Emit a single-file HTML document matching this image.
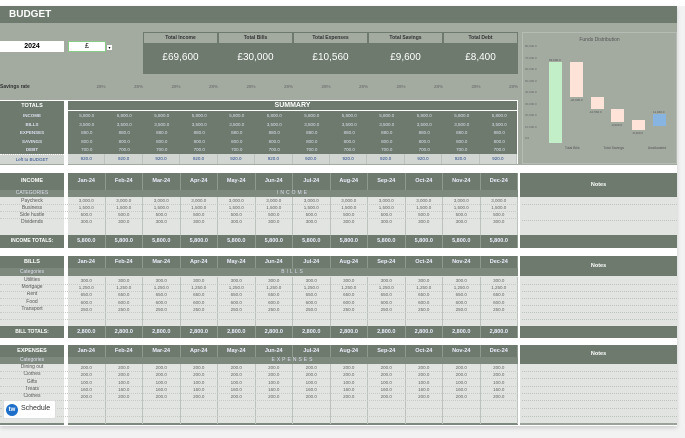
<!DOCTYPE html>
<html><head><meta charset="utf-8"><style>
*{margin:0;padding:0;box-sizing:border-box}
body{width:685px;height:438px;background:#f2f2f2;font-family:"Liberation Sans",sans-serif;position:relative;overflow:hidden}
.a{position:absolute}
.dk{background:#6d7a6d;color:#fff}
.lt{background:#e1e4e1;color:#555}
.row{position:absolute;display:flex;left:68px;width:450px}
.row span{flex:1;text-align:center;font-size:4.5px;line-height:inherit}
.hdr span{font-size:5.5px;font-weight:bold;border-right:1px solid #8f9a8f;color:#eef}
.grid span{border-right:1px solid #bcc2bc}
.lab{position:absolute;left:0;width:64px;text-align:center;font-size:5px}
.ln{position:absolute;left:0;width:518px;border-top:1px dotted #c6cbc6}
.nl{position:absolute;left:522px;width:155px;border-top:1px dotted #bcc2bc}
.v{position:absolute;font-size:3px;color:#555}
</style></head><body>
<div class="a" style="left:0;top:0;width:685px;height:6px;background:#fff"></div>
<div class="a" style="left:0;top:6px;width:677px;height:420px;background:#fff;box-shadow:0 2px 4px #ccc"></div>
<div class="a dk" style="left:0;top:6px;width:677px;height:17px;font-weight:bold;font-size:10px;padding:3px 9px">BUDGET</div>
<div class="a" style="left:0;top:23px;width:677px;height:142px;background:#a3aba1"></div>
<div class="a" style="left:0;top:41px;width:64px;height:11px;background:#fff;font-size:7px;font-weight:bold;text-align:center;line-height:11px">2024</div>
<div class="a" style="left:68px;top:41px;width:38px;height:11px;background:#fff;border:1px solid #8c8;font-size:7px;text-align:center;line-height:9px">£</div>
<div class="a" style="left:107px;top:45px;width:5px;height:5px;background:#fff;font-size:4px;text-align:center">▾</div>
<div class="a" style="left:143px;top:32px;width:375px;height:42px;display:flex">
<div style="flex:1;border:1px solid #6d7a6d"><div style="height:10px;font-size:5px;font-weight:bold;text-align:center;line-height:10px;color:#333;background:#a3aba1">Total Income</div><div class="dk" style="height:30px;font-size:10px;text-align:center;line-height:30px">£69,600</div></div>
<div style="flex:1;border:1px solid #6d7a6d"><div style="height:10px;font-size:5px;font-weight:bold;text-align:center;line-height:10px;color:#333;background:#a3aba1">Total Bills</div><div class="dk" style="height:30px;font-size:10px;text-align:center;line-height:30px">£30,000</div></div>
<div style="flex:1;border:1px solid #6d7a6d"><div style="height:10px;font-size:5px;font-weight:bold;text-align:center;line-height:10px;color:#333;background:#a3aba1">Total Expenses</div><div class="dk" style="height:30px;font-size:10px;text-align:center;line-height:30px">£10,560</div></div>
<div style="flex:1;border:1px solid #6d7a6d"><div style="height:10px;font-size:5px;font-weight:bold;text-align:center;line-height:10px;color:#333;background:#a3aba1">Total Savings</div><div class="dk" style="height:30px;font-size:10px;text-align:center;line-height:30px">£9,600</div></div>
<div style="flex:1;border:1px solid #6d7a6d"><div style="height:10px;font-size:5px;font-weight:bold;text-align:center;line-height:10px;color:#333;background:#a3aba1">Total Debt</div><div class="dk" style="height:30px;font-size:10px;text-align:center;line-height:30px">£8,400</div></div>
</div>
<div class="a" style="left:0;top:84px;font-size:5px;font-weight:bold;color:#333">Savings rate</div>
<div class="row" style="top:84px;line-height:6px;color:#666"><span style="text-align:right">28%</span><span style="text-align:right">28%</span><span style="text-align:right">28%</span><span style="text-align:right">28%</span><span style="text-align:right">28%</span><span style="text-align:right">28%</span><span style="text-align:right">28%</span><span style="text-align:right">28%</span><span style="text-align:right">28%</span><span style="text-align:right">28%</span><span style="text-align:right">28%</span><span style="text-align:right">28%</span></div>
<!-- chart -->
<div class="a" style="left:522px;top:32px;width:155px;height:132px;border:1px solid #b5bcb3;background:#a3aba1">
<div style="text-align:center;font-size:5px;color:#555;margin-top:4px">Funds Distribution</div>
<div class="a" style="left:26px;top:29px;width:13px;height:81px;background:#c3efc8"></div>
<div class="a" style="left:47px;top:29px;width:13px;height:35px;background:#fde3d8"></div>
<div class="a" style="left:68px;top:64px;width:13px;height:12px;background:#fde3d8"></div>
<div class="a" style="left:88px;top:76px;width:13px;height:13px;background:#fde3d8"></div>
<div class="a" style="left:109px;top:87px;width:13px;height:10px;background:#fde3d8"></div>
<div class="a" style="left:130px;top:81px;width:13px;height:12px;background:#88b4e2"></div>
<div class="v" style="left:26px;top:25px">69,600.0</div>
<div class="v" style="left:47px;top:65px">-30,000.0</div>
<div class="v" style="left:66px;top:77px">-10,560.0</div>
<div class="v" style="left:88px;top:90px">-9,600.0</div>
<div class="v" style="left:109px;top:98px">-8,400.0</div>
<div class="v" style="left:130px;top:77px">11,040.0</div>
<div class="a" style="left:2px;top:8px;font-size:3px;color:#666;line-height:11.5px">80,000.0<br>70,000.0<br>60,000.0<br>50,000.0<br>40,000.0<br>30,000.0<br>20,000.0<br>10,000.0<br>0.0</div>
<div class="a" style="left:30px;top:113px;width:125px;font-size:3.5px;color:#555;display:flex;justify-content:space-around"><span>Total Bills</span><span>Total Savings</span><span>Unallocated</span></div>
</div>
<!-- totals -->
<div class="a dk" style="left:0;top:100px;width:64px;height:54px;border-top:1px solid #fff"></div>
<div class="lab dk" style="top:101px;height:10px;line-height:10px;font-weight:bold;font-size:5.5px">TOTALS</div>
<div class="lab" style="top:112px;color:#dde;font-size:4.5px;line-height:8.5px;font-weight:bold">INCOME<br>BILLS<br>EXPENSES<br>SAVINGS<br>DEBT</div>
<div class="a" style="left:0;top:154px;width:64px;height:10px;background:#d2d6d2;font-size:4.5px;color:#2a4b8a;text-align:center;line-height:10px;border-top:1px dotted #fff">Left to BUDGET</div>
<div class="a dk" style="left:68px;top:100px;width:450px;height:54px;border-top:1px solid #fff;border-right:1px solid #fff"></div>
<div class="a" style="left:68px;top:101px;width:450px;height:10px;font-size:7px;font-weight:bold;color:#fff;text-align:center;line-height:10px;border-bottom:1px solid #fff;border-right:1px solid #fff">SUMMARY</div>
<div class="row" style="top:112px;line-height:8.5px;color:#dde"><span>5,800.0</span><span>5,800.0</span><span>5,800.0</span><span>5,800.0</span><span>5,800.0</span><span>5,800.0</span><span>5,800.0</span><span>5,800.0</span><span>5,800.0</span><span>5,800.0</span><span>5,800.0</span><span>5,800.0</span></div>
<div class="row" style="top:120.5px;line-height:8.5px;color:#dde"><span>3,500.0</span><span>3,500.0</span><span>3,500.0</span><span>3,500.0</span><span>3,500.0</span><span>3,500.0</span><span>3,500.0</span><span>3,500.0</span><span>3,500.0</span><span>3,500.0</span><span>3,500.0</span><span>3,500.0</span></div>
<div class="row" style="top:129px;line-height:8.5px;color:#dde"><span>880.0</span><span>880.0</span><span>880.0</span><span>880.0</span><span>880.0</span><span>880.0</span><span>880.0</span><span>880.0</span><span>880.0</span><span>880.0</span><span>880.0</span><span>880.0</span></div>
<div class="row" style="top:137.5px;line-height:8.5px;color:#dde"><span>800.0</span><span>800.0</span><span>800.0</span><span>800.0</span><span>800.0</span><span>800.0</span><span>800.0</span><span>800.0</span><span>800.0</span><span>800.0</span><span>800.0</span><span>800.0</span></div>
<div class="row" style="top:146px;line-height:8.5px;color:#dde"><span>700.0</span><span>700.0</span><span>700.0</span><span>700.0</span><span>700.0</span><span>700.0</span><span>700.0</span><span>700.0</span><span>700.0</span><span>700.0</span><span>700.0</span><span>700.0</span></div>
<div class="row grid" style="top:154px;height:10px;line-height:10px;background:#d2d6d2;color:#2a4b8a;border-right:1px solid #fff"><span>920.0</span><span>920.0</span><span>920.0</span><span>920.0</span><span>920.0</span><span>920.0</span><span>920.0</span><span>920.0</span><span>920.0</span><span>920.0</span><span>920.0</span><span>920.0</span></div>
<div class="a" style="left:64px;top:100px;width:4px;height:65px;background:#fff"></div>

<!-- INCOME -->
<div class="a lt" style="left:0;top:173px;width:518px;height:75px"></div>
<div class="a lt" style="left:520px;top:173px;width:157px;height:75px"></div>
<div class="a" style="left:64px;top:173px;width:4px;height:75px;background:#fff"></div>
<div class="a" style="left:518px;top:173px;width:2px;height:253px;background:#fff"></div>
<div class="lab dk" style="top:173px;height:17px;line-height:17px;font-weight:bold;font-size:5.5px">INCOME</div>
<div class="row dk hdr" style="top:173px;height:17px;line-height:17px"><span>Jan-24</span><span>Feb-24</span><span>Mar-24</span><span>Apr-24</span><span>May-24</span><span>Jun-24</span><span>Jul-24</span><span>Aug-24</span><span>Sep-24</span><span>Oct-24</span><span>Nov-24</span><span>Dec-24</span></div>
<div class="lab" style="top:190px;height:7px;line-height:7px;background:#7d897d;color:#dde;font-size:5px">CATEGORIES</div>
<div class="a" style="left:68px;top:190px;width:450px;height:7px;background:#7d897d;color:#dde;font-size:5px;text-align:center;line-height:7px;letter-spacing:2px">INCOME</div>
<div class="a dk" style="left:520px;top:173px;width:157px;height:24px;font-size:5.5px;font-weight:bold;text-align:center;line-height:24px">Notes</div>
<div class="lab" style="top:198px;font-size:5px;line-height:7px;color:#555">Paycheck<br>Business<br>Side hustle<br>Dividends</div>
<div class="row grid" style="top:197px;height:38px;line-height:7px;color:#666"><span>3,000.0<br>1,500.0<br>500.0<br>300.0</span><span>3,000.0<br>1,500.0<br>500.0<br>300.0</span><span>3,000.0<br>1,500.0<br>500.0<br>300.0</span><span>3,000.0<br>1,500.0<br>500.0<br>300.0</span><span>3,000.0<br>1,500.0<br>500.0<br>300.0</span><span>3,000.0<br>1,500.0<br>500.0<br>300.0</span><span>3,000.0<br>1,500.0<br>500.0<br>300.0</span><span>3,000.0<br>1,500.0<br>500.0<br>300.0</span><span>3,000.0<br>1,500.0<br>500.0<br>300.0</span><span>3,000.0<br>1,500.0<br>500.0<br>300.0</span><span>3,000.0<br>1,500.0<br>500.0<br>300.0</span><span>3,000.0<br>1,500.0<br>500.0<br>300.0</span></div>
<div class="ln" style="top:204px"></div><div class="ln" style="top:211px"></div><div class="ln" style="top:218px"></div>
<div class="nl" style="top:204px"></div><div class="nl" style="top:220px"></div>
<div class="lab dk" style="top:235px;height:13px;line-height:13px;font-weight:bold;font-size:5px">INCOME TOTALS:</div>
<div class="row dk hdr" style="top:235px;height:13px;line-height:13px"><span>5,800.0</span><span>5,800.0</span><span>5,800.0</span><span>5,800.0</span><span>5,800.0</span><span>5,800.0</span><span>5,800.0</span><span>5,800.0</span><span>5,800.0</span><span>5,800.0</span><span>5,800.0</span><span>5,800.0</span></div>
<div class="a dk" style="left:520px;top:235px;width:157px;height:13px"></div>

<!-- BILLS -->
<div class="a lt" style="left:0;top:256px;width:518px;height:82px"></div>
<div class="a lt" style="left:520px;top:256px;width:157px;height:82px"></div>
<div class="a" style="left:64px;top:256px;width:4px;height:82px;background:#fff"></div>
<div class="lab dk" style="top:256px;height:12px;line-height:12px;font-weight:bold;font-size:5.5px">BILLS</div>
<div class="row dk hdr" style="top:256px;height:12px;line-height:12px"><span>Jan-24</span><span>Feb-24</span><span>Mar-24</span><span>Apr-24</span><span>May-24</span><span>Jun-24</span><span>Jul-24</span><span>Aug-24</span><span>Sep-24</span><span>Oct-24</span><span>Nov-24</span><span>Dec-24</span></div>
<div class="lab" style="top:268px;height:8px;line-height:8px;background:#7d897d;color:#dde;font-size:5px">Categories</div>
<div class="a" style="left:68px;top:268px;width:450px;height:8px;background:#7d897d;color:#dde;font-size:5px;text-align:center;line-height:8px;letter-spacing:2px">BILLS</div>
<div class="a dk" style="left:520px;top:256px;width:157px;height:20px;font-size:5.5px;font-weight:bold;text-align:center;line-height:20px">Notes</div>
<div class="lab" style="top:277px;font-size:5px;line-height:7.2px;color:#555">Utilities<br>Mortgage<br>Rent<br>Food<br>Transport</div>
<div class="row grid" style="top:276px;height:50px;line-height:7.2px;color:#666;padding-top:1px"><span>300.0<br>1,250.0<br>650.0<br>600.0<br>250.0</span><span>300.0<br>1,250.0<br>650.0<br>600.0<br>250.0</span><span>300.0<br>1,250.0<br>650.0<br>600.0<br>250.0</span><span>300.0<br>1,250.0<br>650.0<br>600.0<br>250.0</span><span>300.0<br>1,250.0<br>650.0<br>600.0<br>250.0</span><span>300.0<br>1,250.0<br>650.0<br>600.0<br>250.0</span><span>300.0<br>1,250.0<br>650.0<br>600.0<br>250.0</span><span>300.0<br>1,250.0<br>650.0<br>600.0<br>250.0</span><span>300.0<br>1,250.0<br>650.0<br>600.0<br>250.0</span><span>300.0<br>1,250.0<br>650.0<br>600.0<br>250.0</span><span>300.0<br>1,250.0<br>650.0<br>600.0<br>250.0</span><span>300.0<br>1,250.0<br>650.0<br>600.0<br>250.0</span></div>
<div class="ln" style="top:284px"></div><div class="ln" style="top:291px"></div><div class="ln" style="top:298px"></div><div class="ln" style="top:305px"></div><div class="ln" style="top:312px"></div><div class="ln" style="top:319px"></div>
<div class="nl" style="top:284px"></div><div class="nl" style="top:291px"></div><div class="nl" style="top:298px"></div><div class="nl" style="top:305px"></div><div class="nl" style="top:312px"></div><div class="nl" style="top:319px"></div>
<div class="lab dk" style="top:326px;height:12px;line-height:12px;font-weight:bold;font-size:5px">BILL TOTALS:</div>
<div class="row dk hdr" style="top:326px;height:12px;line-height:12px"><span>2,800.0</span><span>2,800.0</span><span>2,800.0</span><span>2,800.0</span><span>2,800.0</span><span>2,800.0</span><span>2,800.0</span><span>2,800.0</span><span>2,800.0</span><span>2,800.0</span><span>2,800.0</span><span>2,800.0</span></div>
<div class="a dk" style="left:520px;top:326px;width:157px;height:12px"></div>

<!-- EXPENSES -->
<div class="a lt" style="left:0;top:345px;width:518px;height:80px;border-bottom:2px solid #7d897d"></div>
<div class="a lt" style="left:520px;top:345px;width:157px;height:80px;border-bottom:2px solid #9aa29a"></div>
<div class="a" style="left:64px;top:345px;width:4px;height:81px;background:#fff"></div>
<div class="lab dk" style="top:345px;height:12px;line-height:12px;font-weight:bold;font-size:5.5px">EXPENSES</div>
<div class="row dk hdr" style="top:345px;height:12px;line-height:12px"><span>Jan-24</span><span>Feb-24</span><span>Mar-24</span><span>Apr-24</span><span>May-24</span><span>Jun-24</span><span>Jul-24</span><span>Aug-24</span><span>Sep-24</span><span>Oct-24</span><span>Nov-24</span><span>Dec-24</span></div>
<div class="lab" style="top:357px;height:7px;line-height:7px;background:#7d897d;color:#dde;font-size:5px">Categories</div>
<div class="a" style="left:68px;top:357px;width:450px;height:7px;background:#7d897d;color:#dde;font-size:5px;text-align:center;line-height:7px;letter-spacing:2px">EXPENSES</div>
<div class="a dk" style="left:520px;top:345px;width:157px;height:19px;font-size:5.5px;font-weight:bold;text-align:center;line-height:19px">Notes</div>
<div class="lab" style="top:364px;font-size:5px;line-height:7.3px;color:#555">Dining out<br>Clothes<br>Gifts<br>Treats<br>Clothes</div>
<div class="row grid" style="top:364px;height:60px;line-height:7.3px;color:#666"><span>200.0<br>200.0<br>100.0<br>160.0<br>200.0</span><span>200.0<br>200.0<br>100.0<br>160.0<br>200.0</span><span>200.0<br>200.0<br>100.0<br>160.0<br>200.0</span><span>200.0<br>200.0<br>100.0<br>160.0<br>200.0</span><span>200.0<br>200.0<br>100.0<br>160.0<br>200.0</span><span>200.0<br>200.0<br>100.0<br>160.0<br>200.0</span><span>200.0<br>200.0<br>100.0<br>160.0<br>200.0</span><span>200.0<br>200.0<br>100.0<br>160.0<br>200.0</span><span>200.0<br>200.0<br>100.0<br>160.0<br>200.0</span><span>200.0<br>200.0<br>100.0<br>160.0<br>200.0</span><span>200.0<br>200.0<br>100.0<br>160.0<br>200.0</span><span>200.0<br>200.0<br>100.0<br>160.0<br>200.0</span></div>
<div class="ln" style="top:371px"></div><div class="ln" style="top:378px"></div><div class="ln" style="top:386px"></div><div class="ln" style="top:393px"></div><div class="ln" style="top:400px"></div><div class="ln" style="top:408px"></div><div class="ln" style="top:416px"></div>
<div class="nl" style="top:371px"></div><div class="nl" style="top:378px"></div><div class="nl" style="top:386px"></div><div class="nl" style="top:393px"></div><div class="nl" style="top:400px"></div><div class="nl" style="top:408px"></div><div class="nl" style="top:416px"></div>

<div class="a" style="left:3px;top:400px;width:53px;height:19px;background:#fff;border:1px solid #ddd;border-radius:2px">
<div class="a" style="left:2px;top:3px;width:12px;height:12px;border-radius:50%;background:#1e6fc9;color:#fff;font-size:6px;font-weight:bold;text-align:center;line-height:12px">tw</div>
<div class="a" style="left:17px;top:4px;font-size:7px;color:#333">Schedule</div>
</div>
</body></html>
